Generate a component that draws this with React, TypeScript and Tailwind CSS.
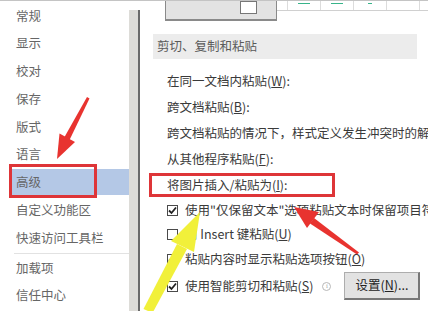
import React from "react";

const sideItems = ["常规", "显示", "校对", "保存", "版式", "语言"];

const Key = ({ k }: { k: string }) => (
  <>
    (<span className="underline">{k}</span>)
  </>
);

const Check = ({ on }: { on: boolean }) => (
  <div className="w-[11px] h-[11px] border border-[#4a4a4a] bg-white flex items-center justify-center shrink-0">
    {on && (
      <svg width="9" height="9" viewBox="0 0 9 9">
        <path d="M1 4.5 L3.5 7 L8 1.5" fill="none" stroke="#222" strokeWidth="1.8" />
      </svg>
    )}
  </div>
);

const Arrows = () => (
  <svg className="absolute left-0 top-0 pointer-events-none" width="428" height="311" viewBox="0 0 428 311">
    {/* sidebar arrow */}
    <polygon points="87,97 89.5,98.5 69.5,140 64.5,137" fill="#e8332f" />
    <polygon points="57,159 59.5,133.5 75,142" fill="#e8332f" />
    {/* yellow arrow */}
    <polygon points="187,249 177,244 143.5,309 152.5,313" fill="#f1f03a" />
    <polygon points="200,212 171,241 194,252" fill="#f1f03a" />
    {/* right red arrow */}
    <polygon points="359,252.5 357,254.5 310,223.5 314,218" fill="#e8332f" />
    <polygon points="294,207 319,212 307,228" fill="#e8332f" />
  </svg>
);

export default function App() {
  return (
    <div className="relative w-[428px] h-[311px] overflow-hidden bg-white font-['Noto_Sans_CJK_SC',sans-serif] text-[12.5px] leading-none">
      <div className="h-px bg-[#c4c4c4]" />
      <div className="flex h-[310px]">
        {/* sidebar */}
        <div className="w-[129px] shrink-0 text-[#666] pt-[1px]">
          {sideItems.map((t) => (
            <div key={t} className="h-[27.75px] flex items-center pl-[16px]">
              {t}
            </div>
          ))}
          <div className="h-[27.75px] flex items-center">
            <div className="ml-[12px] flex-1 h-[26px] bg-[#b4c8e6] flex items-center pl-[4px]">高级</div>
          </div>
          <div className="h-[27.75px] flex items-center pl-[16px]">自定义功能区</div>
          <div className="h-[27.75px] flex items-center pl-[16px]">快速访问工具栏</div>
          <div className="h-px bg-[#e2e2e2] ml-[14px] mt-[1px]" />
          <div className="h-[28px] flex items-center pl-[16px]">加载项</div>
          <div className="h-[27px] flex items-center pl-[16px]">信任中心</div>
        </div>

        {/* scrollbar edge */}
        <div className="w-[11px] shrink-0 pt-[9px] flex flex-col">
          <div className="flex-1 flex">
            <div className="flex-1 bg-[#dddcd8]" />
            <div className="w-[2px] bg-[#6a6a6a]" />
          </div>
        </div>

        {/* content */}
        <div className="flex-1 overflow-hidden whitespace-nowrap text-[#3a3a3a]">
          <div className="flex h-[33px]">
            <div className="ml-[25px] w-[112px] h-[20px] bg-[#e3e3e3] border-x border-b-2 border-[#8a8a8a] relative overflow-hidden">
              <div className="absolute left-[74px] top-0 w-[17px] h-[13px] border border-[#777] bg-white" />
            </div>
            <div className="flex-1 h-[10px] border-b border-[#d0d0d0] flex">
              <div className="w-[11px] border-r border-[#dcdcdc]" />
              {[0, 1, 2, 3].map((i) => (
                <div key={i} className="w-[33px] border-r border-[#dcdcdc] flex justify-center pt-[2px]">
                  {i < 3 && <div className={i === 2 ? "w-[4px] h-px bg-[#38b48a]" : "w-[12px] h-px bg-[#38b48a]"} />}
                </div>
              ))}
            </div>
          </div>

          <div className="ml-[13px] w-[264px] h-[25px] bg-[#ececec] flex items-center pl-[4px] text-[#5a5a5a]">
            剪切、复制和粘贴
          </div>

          <div className="mt-[9px] pl-[27px]">
            <div className="h-[26px] flex items-center">
              在同一文档内粘贴<Key k="W" />:
            </div>
            <div className="h-[26px] flex items-center">
              跨文档粘贴<Key k="B" />:
            </div>
            <div className="h-[26px] flex items-center">跨文档粘贴的情况下，样式定义发生冲突时的解决方法(E):</div>
            <div className="h-[26px] flex items-center">
              从其他程序粘贴<Key k="F" />:
            </div>
          </div>
          <div className="h-[26px] flex items-center ml-[9px]">
            <div className="w-[186px] h-[24px] border-[3px] border-[#de3538] flex items-center pl-[15px]">
              将图片插入/粘贴为<Key k="I" />:
            </div>
          </div>
          <div className="pl-[27px]">
            <div className="h-[24px] flex items-center gap-[7px]">
              <Check on />
              <span>使用"仅保留文本"选项粘贴文本时保留项目符号和编号(L)</span>
            </div>
            <div className="h-[24px] flex items-center gap-[7px]">
              <Check on={false} />
              <span>
                用 Insert 键粘贴<Key k="U" />
              </span>
            </div>
            <div className="h-[26px] flex items-center gap-[7px]">
              <Check on />
              <span>
                粘贴内容时显示粘贴选项按钮<Key k="O" />
              </span>
            </div>
            <div className="h-[28px] flex items-center gap-[7px]">
              <Check on />
              <span>
                使用智能剪切和粘贴<Key k="S" />
              </span>
              <div className="ml-[2px] w-[9px] h-[9px] rounded-full border border-[#b8b8b8] text-[7px] text-[#aaa] flex items-center justify-center font-['Liberation_Serif',serif]">
                i
              </div>
              <div className="ml-[6px] w-[76px] h-[28px] bg-[#e2e2e2] border border-[#adadad] border-b-[2px] border-r-[2px] border-b-[#777] border-r-[#777] flex items-center justify-center text-[#222]">
                设置<Key k="N" />...
              </div>
            </div>
          </div>
        </div>
      </div>
      <div className="absolute left-[9px] top-[164px] w-[88px] h-[34px] border-[3px] border-[#de3538]" />
      <Arrows />
    </div>
  );
}
